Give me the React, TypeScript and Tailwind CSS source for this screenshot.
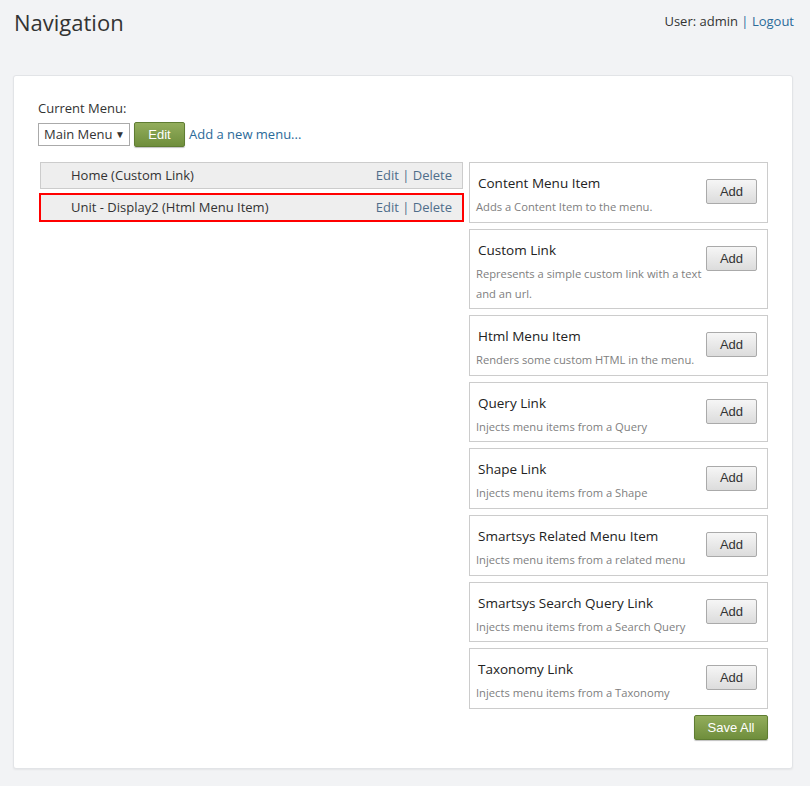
import React from 'react';

const ITEMS = [
  { title: 'Content Menu Item', desc: 'Adds a Content Item to the menu.' },
  { title: 'Custom Link', desc: 'Represents a simple custom link with a text and an url.' },
  { title: 'Html Menu Item', desc: 'Renders some custom HTML in the menu.' },
  { title: 'Query Link', desc: 'Injects menu items from a Query' },
  { title: 'Shape Link', desc: 'Injects menu items from a Shape' },
  { title: 'Smartsys Related Menu Item', desc: 'Injects menu items from a related menu' },
  { title: 'Smartsys Search Query Link', desc: 'Injects menu items from a Search Query' },
  { title: 'Taxonomy Link', desc: 'Injects menu items from a Taxonomy' },
];

const greenBtn =
  "rounded-[2px] border border-[#5f7d32] bg-gradient-to-b from-[#93ad5c] to-[#6f8e3c] text-white text-[13px] font-['Liberation_Sans',Arial,sans-serif] shadow-[0_1px_1px_rgba(0,0,0,0.25)]";

export default function App() {
  return (
    <div className="min-h-screen bg-[#f2f3f5] pl-[13px] pr-[17px] pb-4 font-['Open_Sans',sans-serif] text-[#333]">
      {/* Header */}
      <header className="-mr-[1px] flex h-[75px] items-start justify-between">
        <h1 className="pt-[7px] pl-[1px] text-[22px] leading-[30px] text-[#333]">Navigation</h1>
        <div className="pt-[11px] text-[13px] leading-[20px]">
          User: admin <span className="text-[#2b6a99]">|</span>{' '}
          <a href="#" className="text-[#2b6a99]">Logout</a>
        </div>
      </header>

      {/* Card */}
      <div className="rounded-[3px] border border-[#e2e4e7] bg-white px-[24px] pt-[22px] pb-[28px] shadow-[0_1px_2px_rgba(0,0,0,0.06)]">
        <div className="text-[13px] leading-[20px]">Current Menu:</div>
        <div className="mt-[4px] flex items-center gap-[4px]">
          <div className="flex h-[23px] w-[92px] items-center justify-between border border-[#aaa] bg-white pl-[5px] pr-[4px] text-[13px]">
            <span>Main Menu</span>
            <span className="text-[10px]">▼</span>
          </div>
          <button className={`${greenBtn} h-[25px] w-[51px]`}>Edit</button>
          <a href="#" className="text-[13px] text-[#2b6a99]">Add a new menu...</a>
        </div>

        <div className="mt-[15px] flex gap-[4px]">
          {/* Left list */}
          <div className="w-[427px] shrink-0">
            <div className="mx-[2px] flex h-[27px] items-center justify-between border border-[#ccc] bg-[#eee] pl-[30px] pr-[10px] text-[13px]">
              <span>Home (Custom Link)</span>
              <span className="text-[#4f6d8a]">Edit | Delete</span>
            </div>
            <div className="mx-[1px] mt-[4px] flex h-[29px] items-center justify-between border-2 border-[#f00] bg-[#eee] pl-[30px] pr-[10px] text-[13px]">
              <span>Unit - Display2 (Html Menu Item)</span>
              <span className="text-[#4f6d8a]">Edit | Delete</span>
            </div>
          </div>

          {/* Right column */}
          <div className="flex-1">
            <div className="flex flex-col gap-[6px]">
              {ITEMS.map((item) => (
                <div key={item.title} className="flex border border-[#ccc] bg-white pt-[9px] pb-[4.6px] pl-[6px] pr-[10px]">
                  <div className="flex-1">
                    <div className="pl-[2px] text-[13.5px] leading-[22px] text-[#222]">{item.title}</div>
                    <div className="mt-[3px] text-[11.2px] leading-[20px] text-[#808080]">{item.desc}</div>
                  </div>
                  <div className="pt-[6px]">
                    <button className="h-[25px] w-[51px] rounded-[2px] border border-[#aaa] bg-gradient-to-b from-[#f6f6f6] to-[#dcdcdc] text-[13px] text-[#333] font-['Liberation_Sans',Arial,sans-serif]">
                      Add
                    </button>
                  </div>
                </div>
              ))}
            </div>
            <div className="mt-[6px] flex justify-end">
              <button className={`${greenBtn} h-[25px] w-[74px]`}>Save All</button>
            </div>
          </div>
        </div>
      </div>
    </div>
  );
}
